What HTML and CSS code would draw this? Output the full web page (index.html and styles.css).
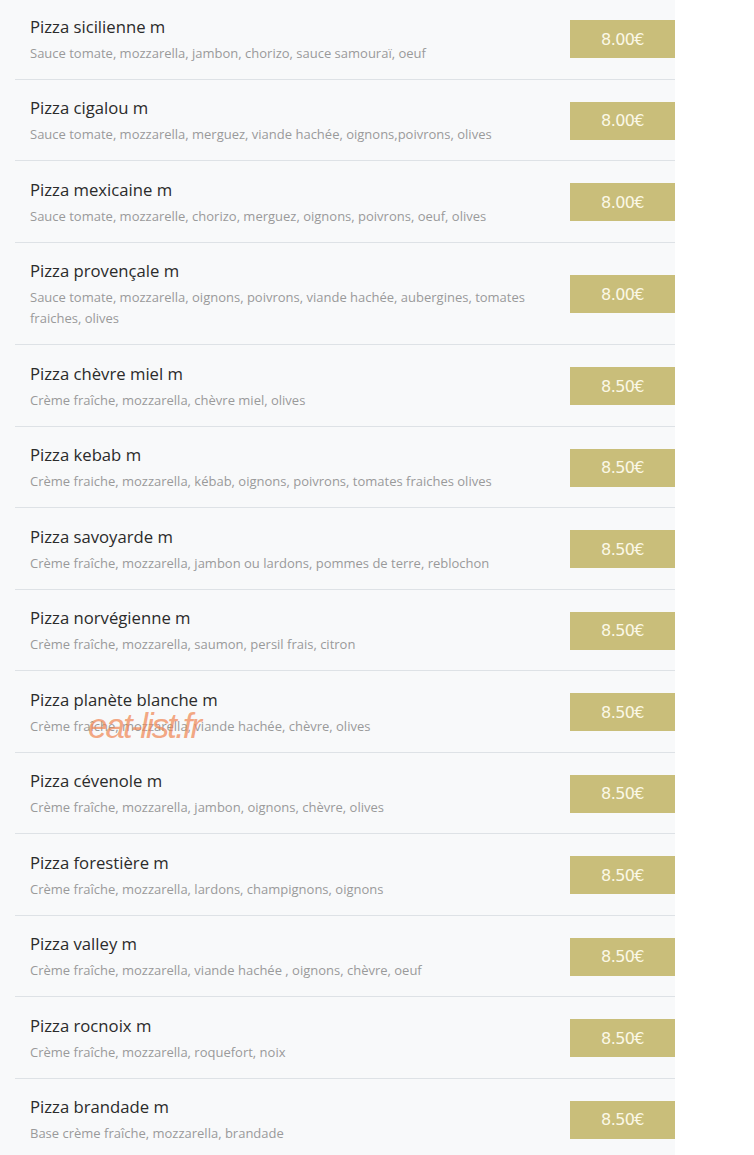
FILE: index.html
```html
<!DOCTYPE html>
<html lang="fr">
<head>
    <meta charset="UTF-8">
    <meta name="viewport" content="width=device-width, initial-scale=1.0">
    <title>Pizzas</title>
    <link rel="stylesheet" href="styles.css">
</head>
<body>
    <div class="menu">
        <div class="item">
            <div class="info">
                <p class="name">Pizza sicilienne m</p>
                <p class="desc">Sauce tomate, mozzarella, jambon, chorizo, sauce samouraï, oeuf</p>
            </div>
            <div class="price">8.00€</div>
        </div>
        <div class="item">
            <div class="info">
                <p class="name">Pizza cigalou m</p>
                <p class="desc">Sauce tomate, mozzarella, merguez, viande hachée, oignons,poivrons, olives</p>
            </div>
            <div class="price">8.00€</div>
        </div>
        <div class="item">
            <div class="info">
                <p class="name">Pizza mexicaine m</p>
                <p class="desc">Sauce tomate, mozzarelle, chorizo, merguez, oignons, poivrons, oeuf, olives</p>
            </div>
            <div class="price">8.00€</div>
        </div>
        <div class="item">
            <div class="info">
                <p class="name">Pizza provençale m</p>
                <p class="desc">Sauce tomate, mozzarella, oignons, poivrons, viande hachée, aubergines, tomates fraiches, olives</p>
            </div>
            <div class="price">8.00€</div>
        </div>
        <div class="item">
            <div class="info">
                <p class="name">Pizza chèvre miel m</p>
                <p class="desc">Crème fraîche, mozzarella, chèvre miel, olives</p>
            </div>
            <div class="price">8.50€</div>
        </div>
        <div class="item">
            <div class="info">
                <p class="name">Pizza kebab m</p>
                <p class="desc">Crème fraiche, mozzarella, kébab, oignons, poivrons, tomates fraiches olives</p>
            </div>
            <div class="price">8.50€</div>
        </div>
        <div class="item">
            <div class="info">
                <p class="name">Pizza savoyarde m</p>
                <p class="desc">Crème fraîche, mozzarella, jambon ou lardons, pommes de terre, reblochon</p>
            </div>
            <div class="price">8.50€</div>
        </div>
        <div class="item">
            <div class="info">
                <p class="name">Pizza norvégienne m</p>
                <p class="desc">Crème fraîche, mozzarella, saumon, persil frais, citron</p>
            </div>
            <div class="price">8.50€</div>
        </div>
        <div class="item">
            <div class="info">
                <p class="name">Pizza planète blanche m</p>
                <p class="desc">Crème fraîche, mozzarella, viande hachée, chèvre, olives</p>
            </div>
            <div class="price">8.50€</div>
            <span class="watermark">eat-list.fr</span>
        </div>
        <div class="item">
            <div class="info">
                <p class="name">Pizza cévenole m</p>
                <p class="desc">Crème fraîche, mozzarella, jambon, oignons, chèvre, olives</p>
            </div>
            <div class="price">8.50€</div>
        </div>
        <div class="item">
            <div class="info">
                <p class="name">Pizza forestière m</p>
                <p class="desc">Crème fraîche, mozzarella, lardons, champignons, oignons</p>
            </div>
            <div class="price">8.50€</div>
        </div>
        <div class="item">
            <div class="info">
                <p class="name">Pizza valley m</p>
                <p class="desc">Crème fraîche, mozzarella, viande hachée , oignons, chèvre, oeuf</p>
            </div>
            <div class="price">8.50€</div>
        </div>
        <div class="item">
            <div class="info">
                <p class="name">Pizza rocnoix m</p>
                <p class="desc">Crème fraîche, mozzarella, roquefort, noix</p>
            </div>
            <div class="price">8.50€</div>
        </div>
        <div class="item">
            <div class="info">
                <p class="name">Pizza brandade m</p>
                <p class="desc">Base crème fraîche, mozzarella, brandade</p>
            </div>
            <div class="price">8.50€</div>
        </div>
    </div>
</body>
</html>
```

FILE: styles.css
```css
body {
    margin: 0;
    background-color: #fff;
    font-family: 'Open Sans', 'Noto Sans', sans-serif;
}
.menu {
    width: 675px;
    margin-top: -2px;
    background-color: #f8f9fa;
}
.item {
    position: relative;
    display: flex;
    align-items: center;
    margin-left: 15px;
    padding: 16.5px 0 15px 15px;
    border-bottom: 1px solid #dee2e6;
}
.item:last-child {
    border-bottom: none;
}
.info {
    flex: 1;
    padding-right: 30px;
}
.name {
    margin: 0 0 4px;
    font-size: 16.7px;
    line-height: 24px;
    color: #2b2b2b;
}
.desc {
    margin: 0;
    font-size: 13px;
    line-height: 21px;
    color: #9a9a9a;
}
.price {
    width: 105px;
    height: 38px;
    flex-shrink: 0;
    display: flex;
    align-items: center;
    justify-content: center;
    background-color: #c9be7a;
    color: #fbf8e6;
    font-family: 'DejaVu Sans', sans-serif;
    font-size: 16px;
    letter-spacing: -0.6px;
}
.watermark {
    position: absolute;
    left: 73px;
    top: 37px;
    font-family: 'Liberation Sans', sans-serif;
    font-style: italic;
    font-size: 35px;
    line-height: 1;
    letter-spacing: -2px;
    color: rgba(240, 135, 85, 0.72);
}
```
